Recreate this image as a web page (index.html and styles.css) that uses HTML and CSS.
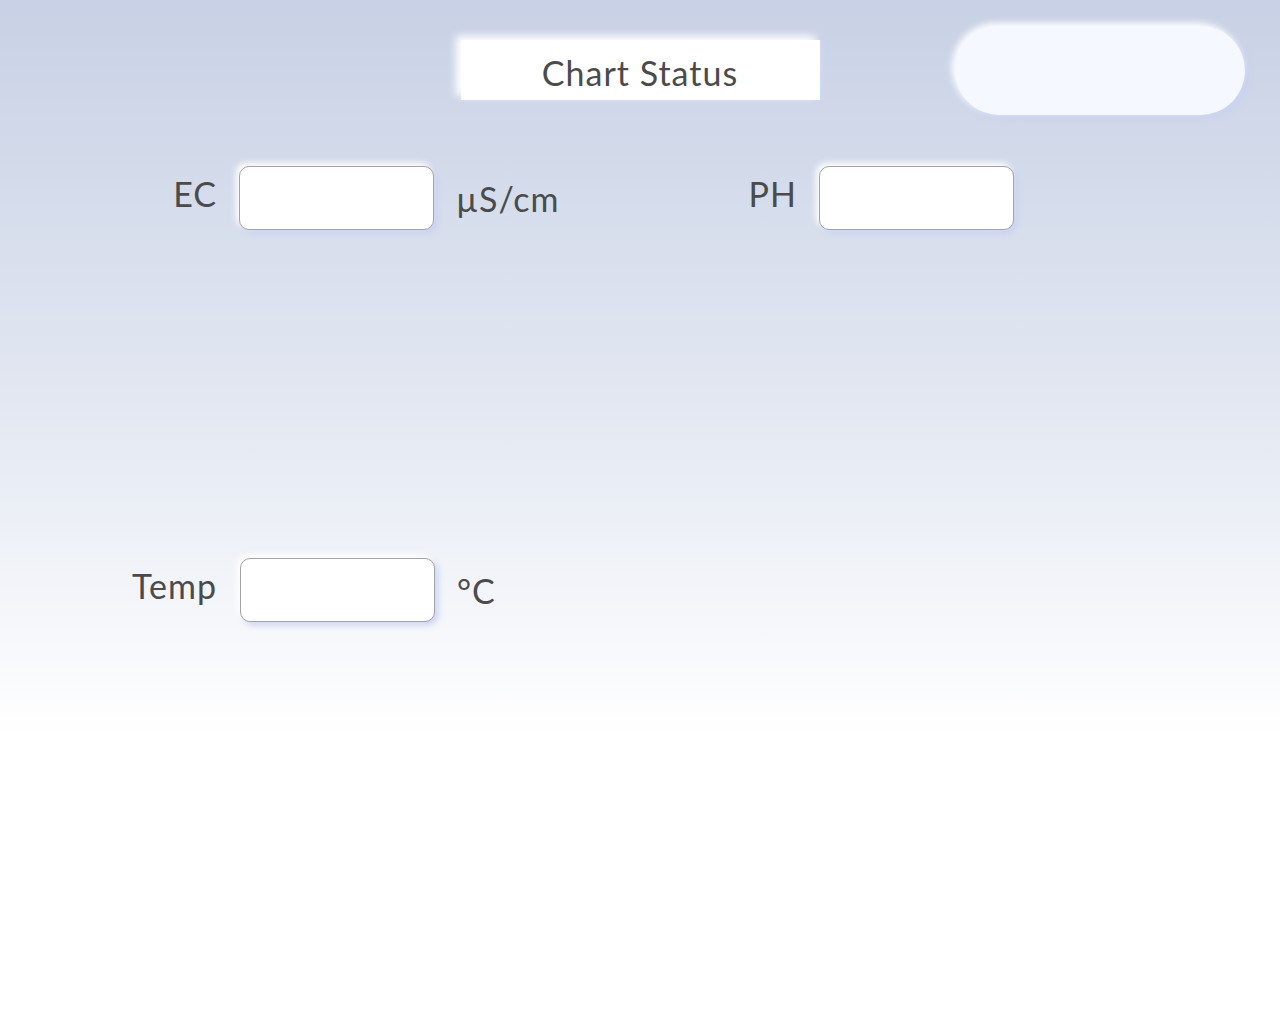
FILE: index.html
```html
<!DOCTYPE html>
<html lang="en">
<head>
    <meta charset="UTF-8">
    <meta name="viewport" content="width=device-width, initial-scale=1.0">
    <title>Chart Status</title>
    <link rel="stylesheet" href="styles.css">
</head>
<body>
    <div class="ust-bar">
        <div class="bos"></div>
        <div class="baslik">Chart Status</div>
        <div class="durum-kutu"></div>
    </div>

    <div class="olcum-alani">
        <div class="olcum">
            <span class="etiket">EC</span>
            <input class="deger-input" type="text">
            <span class="birim">µS/cm</span>
        </div>
        <div class="olcum">
            <span class="etiket">PH</span>
            <input class="deger-input" type="text">
            <span class="birim"></span>
        </div>
        <div class="olcum">
            <span class="etiket">Temp</span>
            <input class="deger-input" type="text">
            <span class="birim">°C</span>
        </div>
    </div>
</body>
</html>
```

FILE: styles.css
```css
html, body {
    margin: 0;
    height: 100%;
}

body {
    background: linear-gradient(180deg, #c8d1e5 0%, #e3e8f2 40%, #ffffff 72%, #ffffff 100%);
    font-family: "Lato", "Open Sans", sans-serif;
    color: #4b4b4b;
    letter-spacing: 1px;
}

.ust-bar {
    display: grid;
    grid-template-columns: 1fr 359px 1fr;
    align-items: start;
}

.baslik {
    margin-top: 40px;
    height: 60px;
    background: #ffffff;
    display: flex;
    justify-content: center;
    align-items: center;
    font-size: 34px;
    padding-top: 4px;
    box-sizing: border-box;
    box-shadow: -5px -4px 8px #ffffff, 2px 1px 4px #cfd7f2; /* hafif parlama */
}

.durum-kutu {
    justify-self: end;
    margin-top: 26px;
    margin-right: 35px;
    width: 290px;
    height: 89px;
    border-radius: 45px;
    background: #f5f8ff;
    box-shadow: -3px -3px 7px #ffffff, 3px 3px 7px #c9d1f0;
}

.olcum-alani {
    display: grid;
    grid-template-columns: 580px 580px;
    row-gap: 328px;
    padding-left: 115px;
    margin-top: 51px;
}

.olcum {
    display: flex;
    align-items: center;
    height: 64px;
}

.etiket {
    width: 102px;
    text-align: right;
    font-size: 34px;
    margin-right: 22px;
    margin-bottom: 10px;
}

.deger-input {
    width: 195px;
    height: 64px;
    box-sizing: border-box;
    border: 1px solid #a3a3a3;
    border-radius: 10px;
    background: #ffffff;
    outline: none;
    box-shadow: -3px -3px 6px #ffffff, 3px 3px 6px #c8d0f3;
}

.birim {
    margin-left: 22px;
    font-size: 34px;
}

.olcum:nth-child(3) .deger-input {
    margin-left: 1px;
}
```
